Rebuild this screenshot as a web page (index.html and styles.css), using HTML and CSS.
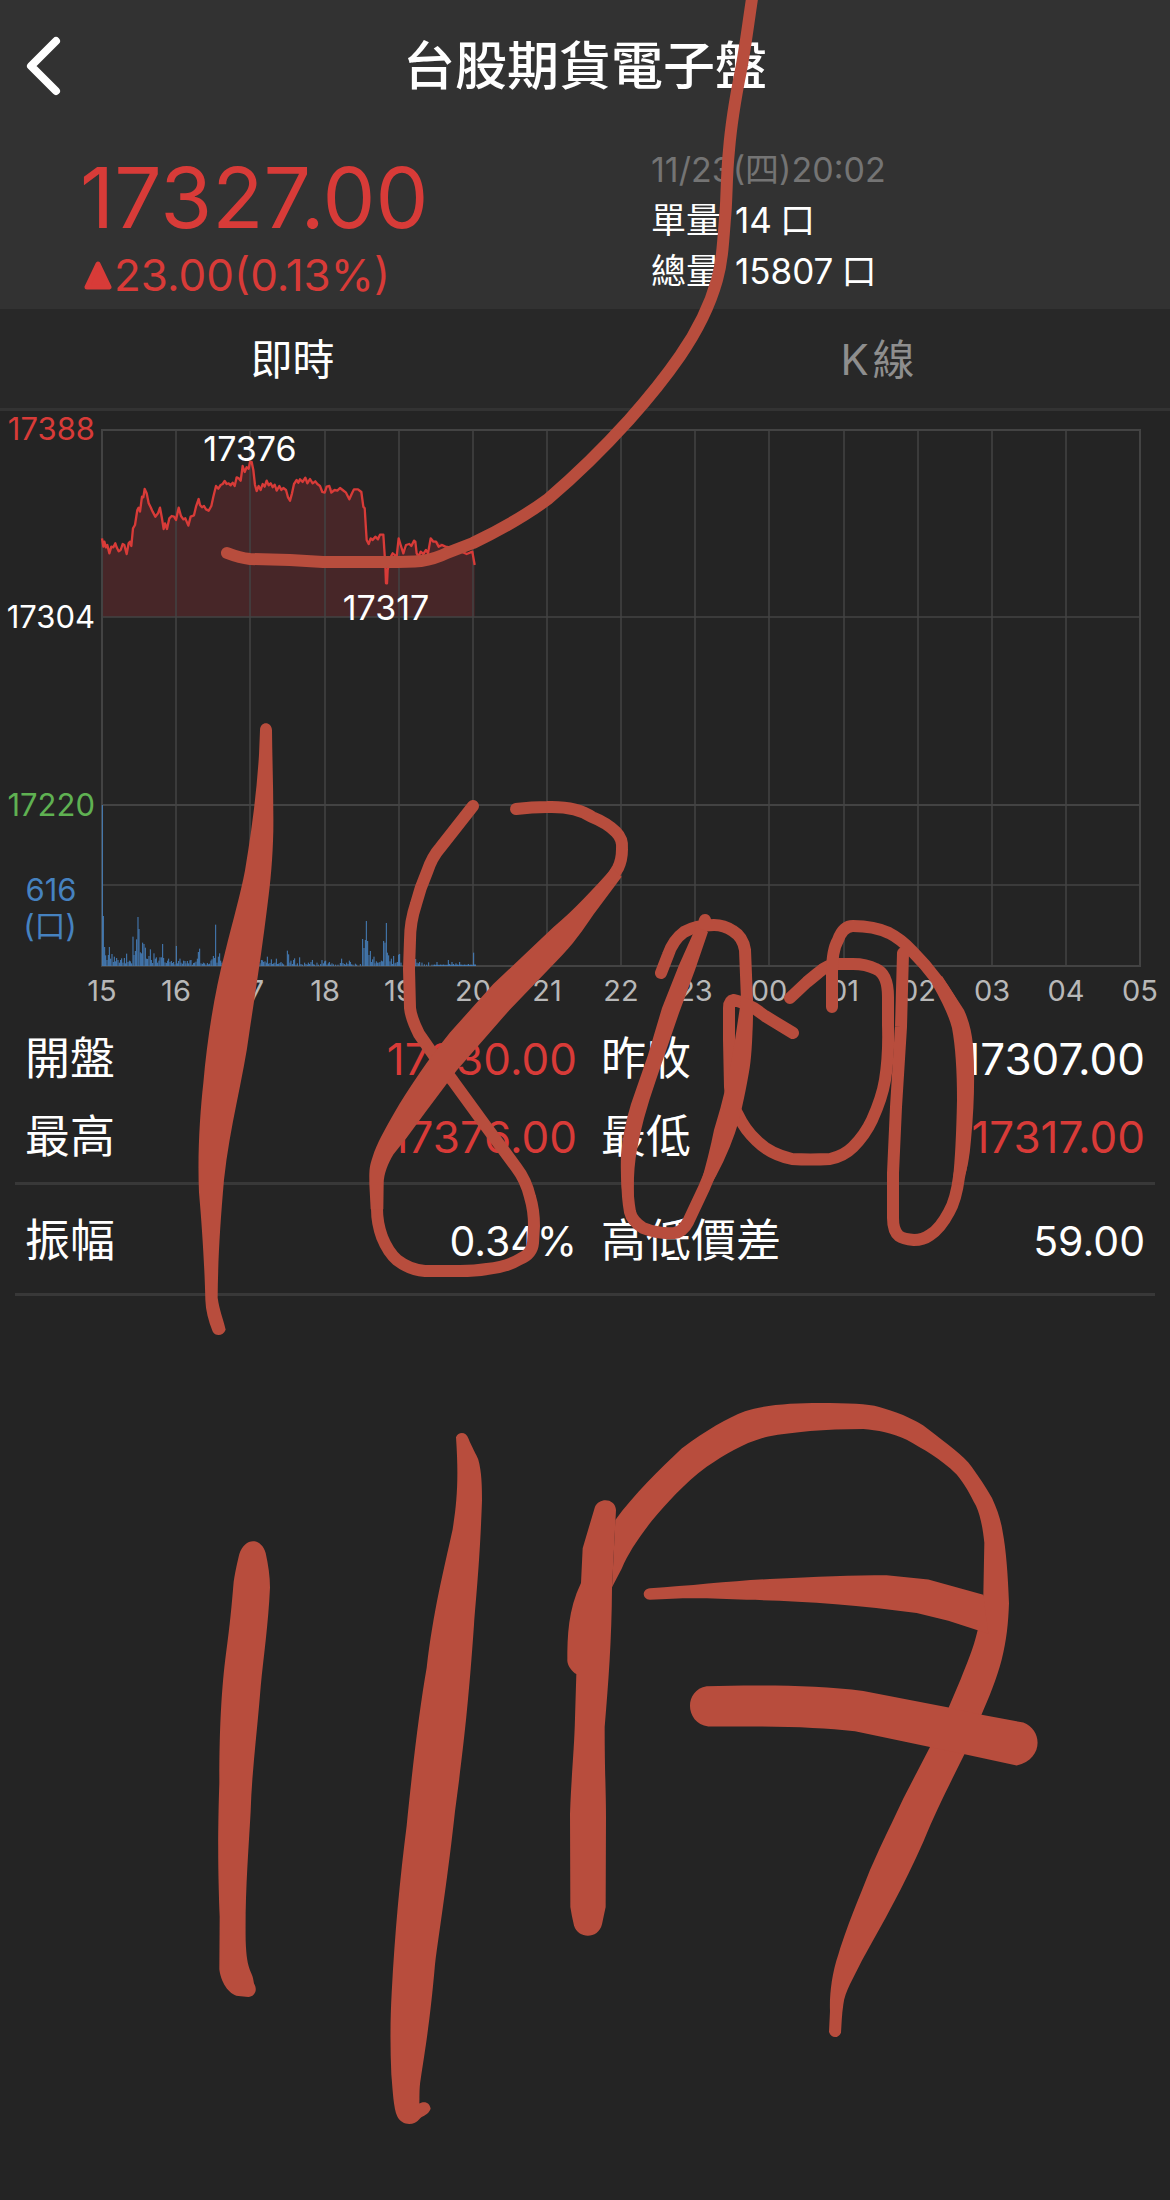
FILE: index.html
```html
<!DOCTYPE html>
<html lang="zh-Hant">
<head>
<meta charset="utf-8">
<meta name="viewport" content="width=device-width, initial-scale=1">
<title>台股期貨電子盤</title>
<link rel="stylesheet" href="styles.css">
</head>
<body>
<header class="header">
  <div class="topbar">
    <button class="back" type="button" aria-label="返回">
      <svg width="36" height="60" viewBox="0 0 36 60" aria-hidden="true"><path d="M31 5 L6 30 L31 55"/></svg>
    </button>
    <h1 class="title">台股期貨電子盤</h1>
  </div>
  <div class="quote">
    <div class="quote-price">
      <div class="price">17327.00</div>
      <div class="change">
        <svg class="arrow" width="28" height="29" viewBox="0 0 28 29" aria-hidden="true"><path d="M14 3 L25 26 H3 Z"/></svg>
        <span>23.00(0.13%)</span>
      </div>
    </div>
    <div class="quote-info">
      <div class="time">11/23(四)20:02</div>
      <div class="lots"><span>單量</span><span>14</span><span>口</span></div>
      <div class="lots"><span>總量</span><span>15807</span><span>口</span></div>
    </div>
  </div>
</header>

<nav class="tabs">
  <button class="tab tab-active" type="button">即時</button>
  <button class="tab" type="button"><span>K</span><span>線</span></button>
</nav>

<main>
  <svg class="chart" viewBox="0 411 1170 609" role="img" aria-label="即時走勢圖">
    <g transform="translate(0 410) scale(.33333)">
      <path class="area" d="M306 621 V385 L310 410 313 395 318 412 322 405 328 430 334 410 340 412 346 400 350 412 356 424 362 420 368 402 373 405 380 432 386 400 390 395 394 408 399 355 405 345 412 300 416 293 420 305 426 260 430 262 434 237 440 250 446 280 452 292 458 305 466 320 474 310 480 293 485 320 491 357 495 340 501 357 508 325 515 318 522 320 528 330 536 293 543 318 550 328 556 325 565 347 572 320 582 316 588 290 596 267 600 285 606 292 612 288 618 298 626 302 634 288 640 260 648 228 655 236 662 225 668 222 674 213 680 222 698 220 704 228 710 202 722 212 728 168 734 186 740 172 746 176 750 156 755 156 760 180 765 225 770 243 776 228 782 240 788 222 794 230 800 212 806 226 830 242 838 228 858 240 870 272 880 222 890 210 916 203 952 222 967 246 988 228 1004 240 1028 240 1048 268 1062 238 1084 246 1100 390 1106 402 1112 385 1140 374 1150 374 1158 520 1161 520 1170 445 1190 440 1196 385 1210 430 1242 392 1250 430 1284 430 1292 385 1350 412 1400 430 1417 425 1424 465 V621 Z"/>
    </g>
    <path class="grid" d="M176 430V966 M250 430V966 M325 430V966 M399 430V966 M473 430V966 M547 430V966 M621 430V966 M695 430V966 M769 430V966 M844 430V966 M918 430V966 M992 430V966 M1066 430V966 M102 617H1140 M102 885H1140"/>
    <path class="frame" d="M102 430H1140V966H102Z M102 805H1140"/>
    <g transform="translate(0 410) scale(.33333)">
      <path class="line" d="M306 385 L310 410 313 395 318 412 322 405 328 430 334 410 340 412 346 400 350 412 356 424 362 420 368 402 373 405 380 432 386 400 390 395 394 408 399 355 405 345 412 300 416 293 420 305 426 260 430 262 434 237 440 250 446 280 452 292 458 305 466 320 474 310 480 293 485 320 491 357 495 340 501 357 508 325 515 318 522 320 528 330 536 293 543 318 550 328 556 325 565 347 572 320 582 316 588 290 596 267 600 285 606 292 612 288 618 298 626 302 634 288 640 260 648 228 655 236 662 225 668 222 674 213 680 222 686 220 692 226 698 218 704 228 710 202 716 205 722 212 728 168 734 186 740 172 746 176 750 156 755 156 760 180 765 225 770 243 776 228 782 240 788 222 794 230 800 212 806 226 812 220 818 232 824 224 830 242 838 228 844 240 850 234 858 240 864 262 870 272 876 250 882 222 890 210 895 218 900 208 908 216 916 203 922 220 930 207 938 220 946 214 952 222 960 228 967 246 974 248 980 230 988 228 994 248 1004 240 1012 242 1020 234 1028 240 1038 248 1048 268 1056 250 1062 238 1074 238 1084 246 1090 290 1094 295 1100 390 1106 402 1112 385 1118 390 1126 380 1134 388 1140 374 1150 374 1156 465 1158 520 1161 520 1163 480 1170 445 1178 430 1190 440 1196 385 1202 405 1210 430 1218 405 1228 402 1234 408 1242 392 1246 395 1250 430 1256 440 1262 425 1270 432 1278 420 1284 430 1292 385 1300 395 1308 395 1316 410 1326 405 1336 410 1350 412 1370 418 1400 432 1417 425 1424 465"/>
    </g>
    <g transform="translate(0 840) scale(.33333)">
      <path class="volume" d="M307 378V-105 M310 378V228 M314 378V321 M317 378V346 M321 378V360 M325 378V345 M328 378V321 M332 378V356 M336 378V342 M340 378V366 M343 378V350 M347 378V364 M350 378V354 M354 378V360 M358 378V368 M362 378V360 M365 378V355 M369 378V368 M373 378V354 M377 378V370 M380 378V341 M384 378V366 M388 378V362 M391 378V364 M395 378V370 M399 378V290 M402 378V345 M406 378V333 M410 378V298 M414 378V231 M417 378V267 M421 378V337 M425 378V340 M428 378V308 M432 378V312 M436 378V323 M440 378V356 M443 378V357 M447 378V348 M451 378V328 M454 378V360 M458 378V369 M462 378V340 M466 378V356 M469 378V352 M473 378V368 M477 378V362 M480 378V352 M484 378V352 M488 378V312 M491 378V354 M495 378V367 M499 378V369 M503 378V362 M506 378V356 M510 378V366 M514 378V363 M517 378V369 M521 378V366 M525 378V373 M529 378V318 M532 378V370 M536 378V363 M540 378V356 M543 378V368 M547 378V371 M551 378V362 M555 378V363 M558 378V370 M562 378V363 M566 378V370 M570 378V361 M573 378V360 M577 378V374 M581 378V369 M584 378V368 M588 378V365 M592 378V356 M595 378V336 M599 378V326 M603 378V370 M607 378V372 M610 378V368 M614 378V370 M618 378V374 M622 378V369 M625 378V373 M629 378V371 M633 378V362 M636 378V358 M640 378V348 M644 378V354 M647 378V254 M651 378V368 M655 378V350 M659 378V340 M662 378V362 M666 378V368 M670 378V364 M674 378V358 M677 378V366 M760 378V368 M765 378V370 M770 378V358 M775 378V366 M780 378V370 M784 378V360 M788 378V361 M791 378V366 M795 378V364 M799 378V368 M802 378V350 M806 378V371 M810 378V369 M814 378V358 M817 378V372 M821 378V370 M825 378V368 M829 378V356 M832 378V372 M836 378V371 M840 378V369 M843 378V366 M847 378V370 M851 378V373 M862 378V332 M866 378V343 M870 378V368 M873 378V362 M877 378V372 M881 378V360 M884 378V355 M888 378V374 M892 378V370 M899 378V352 M903 378V372 M907 378V374 M914 378V368 M918 378V372 M922 378V374 M925 378V368 M929 378V372 M933 378V366 M937 378V360 M940 378V373 M944 378V374 M951 378V368 M955 378V374 M962 378V372 M966 378V360 M970 378V370 M974 378V364 M977 378V362 M981 378V374 M985 378V370 M988 378V366 M992 378V374 M996 378V370 M1000 378V373 M1007 378V374 M1014 378V374 M1021 378V369 M1025 378V356 M1029 378V369 M1033 378V372 M1036 378V374 M1040 378V368 M1044 378V372 M1048 378V362 M1051 378V366 M1055 378V373 M1059 378V374 M1066 378V371 M1070 378V374 M1081 378V372 M1088 378V297 M1092 378V324 M1096 378V300 M1099 378V243 M1103 378V303 M1107 378V345 M1111 378V333 M1114 378V366 M1118 378V358 M1122 378V350 M1125 378V370 M1129 378V364 M1133 378V368 M1137 378V368 M1140 378V366 M1144 378V362 M1148 378V364 M1151 378V303 M1155 378V308 M1159 378V249 M1162 378V338 M1166 378V346 M1170 378V364 M1174 378V356 M1177 378V372 M1181 378V348 M1185 378V370 M1188 378V368 M1192 378V366 M1196 378V344 M1199 378V342 M1203 378V368 M1247 378V357 M1251 378V368 M1255 378V370 M1259 378V366 M1266 378V368 M1273 378V373 M1280 378V374 M1286 378V367 M1296 378V374 M1303 378V374 M1311 378V366 M1322 378V374 M1330 378V374 M1345 378V360 M1349 378V372 M1356 378V366 M1360 378V372 M1368 378V370 M1372 378V374 M1379 378V366 M1383 378V374 M1394 378V374 M1405 378V372 M1413 378V374 M1421 378V338 M1425 378V373 M1300 376H1428"/>
    </g>
    <g class="price-label">
      <text class="up" x="95" y="440">17388</text>
      <text x="95" y="628">17304</text>
      <text class="down" x="95" y="816">17220</text>
    </g>
    <g class="volume-label">
      <text x="51" y="901">616</text>
      <text x="50" y="937">(口)</text>
    </g>
    <g class="peak-label">
      <text x="250" y="461">17376</text>
      <text x="386" y="620">17317</text>
    </g>
    <g class="hour-label">
      <text x="102" y="1001">15</text><text x="176" y="1001">16</text><text x="250" y="1001">17</text><text x="325" y="1001">18</text><text x="399" y="1001">19</text><text x="473" y="1001">20</text><text x="547" y="1001">21</text><text x="621" y="1001">22</text><text x="695" y="1001">23</text><text x="769" y="1001">00</text><text x="844" y="1001">01</text><text x="918" y="1001">02</text><text x="992" y="1001">03</text><text x="1066" y="1001">04</text><text x="1140" y="1001">05</text>
    </g>
  </svg>

  <table class="stats">
    <tr>
      <th scope="row">開盤</th><td class="up">17330.00</td>
      <th scope="row">昨收</th><td>17307.00</td>
    </tr>
    <tr class="ruled">
      <th scope="row">最高</th><td class="up">17376.00</td>
      <th scope="row">最低</th><td class="up">17317.00</td>
    </tr>
    <tr class="ruled derived">
      <th scope="row">振幅</th><td>0.34%</td>
      <th scope="row">高低價差</th><td>59.00</td>
    </tr>
  </table>
</main>

<!-- Hand-drawn marker notes over the screen -->
<svg class="ink" viewBox="0 0 1170 2200" aria-hidden="true">
  <g class="pen">
    <path d="M753 -8 C748 25 745 50 741 70 C736 95 731 125 729 150 C726 180 727 200 725 218 C723 245 722 262 717 280 C710 305 698 330 680 356 C660 385 645 402 629 420 C600 452 575 476 548 499 C525 516 500 530 473 543 L447 553 Q435 559 421 561 Q410 562 387 562 H323 L290 560 L250 559 Q240 558 227 553"/>
    <path d="M473 806 L440 848 Q432 857 427 872 Q420 888 416 904 Q410 922 410 940 L409 969 L410 1008 Q411 1018 419 1034 L437 1060 L453 1081 L485 1125 L516 1167 Q526 1180 530 1197 Q534 1210 534 1226 L533 1243 Q532 1254 520 1259 Q507 1267 487 1269 Q475 1271 460 1271 H425 Q410 1270 397 1260 Q388 1252 382 1237 Q377 1223 377 1209 V1176"/>
    <path d="M516 809 Q532 807 547 807 Q576 806 592 817 Q607 823 616 832 Q623 839 622 849 Q622 860 618 868 L612 878"/>
    <path d="M661 973 L668 955 Q673 940 684 932 Q696 925 714 925 Q724 925 733 931 Q743 937 745 950 L747 1000 Q747 1037 742 1067 L727 1127 L717 1157 L704 1188 L688 1222 Q683 1232 674 1233 Q658 1234 643 1228 Q632 1221 630 1212 Q626 1190 628 1160 Q630 1143 635 1123 L648 1077 L681 980 L696 945 L705 920"/>
    <path d="M793 1033 L765 1016 L754 1008 Q742 1002 734 1000 Q729 1001 729 1008 V1040 L730 1087 Q731 1104 738 1115 Q745 1130 757 1141 Q770 1154 792 1159 Q810 1160 830 1159 Q844 1156 853 1147 Q865 1135 872 1120 Q882 1098 885 1080 Q889 1055 888 1025 V997 Q888 974 876 969 Q866 964 853 964 H838 Q826 965 818 973 L807 982 L790 998"/>
    <path d="M832 1007 L832 973 Q832 950 838 940 Q843 926 853 926 Q874 926 889 933 Q901 939 912 951 Q926 965 937 980 Q950 998 958 1015 Q966 1036 967 1060 Q968 1100 964 1130 Q964 1155 959 1177 Q956 1200 949 1212 Q940 1229 930 1235 Q923 1240 914 1240 Q903 1239 899 1236 Q893 1231 893 1218 V1173 L896 1107 L901 1027 L903 953"/>
  </g>
  <g>
    <path d="M942 976 L964 1010 Q971 1025 973 1045 Q976 1087 971 1140 Q969 1165 964 1178 L953 1178 Q956 1150 957 1100 Q957 1055 952 1028 Q948 1012 932 984 Z"/>
    <path d="M753 1000 Q753 1050 749 1072 Q742 1112 735 1133 Q725 1162 708 1190 L700 1186 Q709 1155 714 1130 Q728 1085 735 1040 L741 1000 Z"/>
    <path d="M696 927 L679 965 L662 1008 L648 1055 L631 1104 Q623 1130 621 1155 Q620 1185 624 1202 L634 1200 Q633 1170 637 1150 Q642 1120 656 1080 L679 1013 L695 970 L708 932 Z"/>
  </g>
  <g transform="translate(160 700) scale(.33333 .42092)">
    <path d="M300 72 C300 50 335 50 336 72 C337 150 341 230 340 310 C338 380 332 430 322 490 C305 600 285 700 268 790 C250 900 210 1010 192 1140 C180 1250 174 1330 173 1420 C178 1450 190 1470 197 1496 C190 1512 165 1512 158 1500 C145 1475 137 1450 136 1425 C134 1350 126 1250 117 1170 C112 1080 120 980 130 910 C142 800 165 690 195 600 C220 520 242 460 255 405 C275 310 290 220 297 130 Z"/>
    <path d="M1357 398 C1300 450 1240 500 1180 540 L1000 675 L870 790 C840 820 810 850 780 885 C750 920 725 950 700 985 C675 1020 650 1055 638 1085 C627 1110 628 1120 628 1150 L632 1210 L670 1210 L671 1150 C671 1125 685 1100 700 1080 L740 1040 L800 975 L890 880 L1050 735 L1190 620 C1240 580 1270 545 1300 510 L1385 420 Z"/>
  </g>
  <g transform="translate(180 1400) scale(.33333 .47832)">
    <path d="M178 322 C195 285 245 288 257 320 C265 345 270 370 270 392 C265 470 250 540 242 600 C232 690 215 780 212 860 C205 950 195 1030 197 1130 C200 1200 218 1190 222 1220 C235 1235 222 1248 205 1248 L175 1246 C145 1243 122 1215 118 1190 L119 1080 C115 1000 112 930 118 800 C118 680 125 600 138 530 C150 470 155 430 161 380 C168 350 172 340 178 322 Z"/>
    <path d="M828 78 C835 66 858 66 865 80 C875 98 890 115 895 125 C905 150 906 180 906 210 C900 330 890 400 882 470 C865 640 850 730 825 860 C805 990 780 1100 765 1180 C750 1300 735 1360 722 1420 C717 1440 719 1460 718 1471 C735 1464 750 1470 752 1482 C745 1495 730 1496 720 1502 C700 1520 665 1516 652 1498 C640 1480 638 1440 634 1410 C630 1350 631 1290 635 1240 C645 1110 660 1000 680 890 C700 750 720 640 740 560 C760 440 790 360 818 270 C832 210 836 160 828 78 Z"/>
  </g>
  <g transform="translate(540 1380) scale(.33333 .43367)">
    <path d="M128 388 L165 292 C178 270 226 272 228 300 L216 480 C215 600 205 700 194 800 C194 900 198 950 198 1010 L197 1215 Q190 1240 186 1255 C175 1290 115 1290 102 1258 Q95 1235 91 1215 L90 1000 C95 900 103 850 105 780 L109 678 C98 674 83 660 82 648 C82 590 84 530 123 468 Z"/>
    <path d="M226 323 C280 265 360 205 425 158 C500 115 560 88 615 72 C680 55 780 52 870 53 C950 54 1000 56 1030 65 C1090 78 1130 95 1150 105 C1200 135 1250 162 1285 190 C1315 220 1340 250 1356 272 C1372 300 1382 320 1388 350 C1398 390 1404 450 1407 515 C1405 560 1400 600 1385 645 C1370 690 1345 735 1325 771 L1274 862 C1230 930 1190 990 1150 1065 C1090 1170 1030 1250 965 1340 C940 1380 915 1410 910 1440 C905 1465 905 1485 903 1505 C895 1519 873 1519 867 1503 L870 1455 C868 1420 875 1370 895 1325 C930 1240 960 1190 990 1130 C1030 1060 1060 1015 1090 965 L1170 846 L1226 755 L1262 690 C1280 655 1300 620 1313 577 L1330 495 L1333 375 C1328 340 1322 315 1308 290 C1290 265 1275 240 1250 218 C1200 180 1150 160 1100 138 C1060 123 1010 115 970 113 C850 113 760 120 685 130 C610 145 560 170 500 200 C430 240 380 285 335 325 C290 370 265 400 245 435 L216 478 Z"/>
    <path d="M330 480 C450 475 580 463 690 459 C830 453 940 450 1040 450 L1165 460 L1330 495 L1345 585 L1313 577 L1225 555 L1130 537 C950 518 760 508 620 507 C520 503 430 501 330 507 C305 505 305 482 330 480 Z"/>
    <path d="M500 706 C650 703 830 703 970 717 L1226 755 L1325 772 L1450 790 C1510 808 1510 875 1430 889 L1274 863 L1170 846 L945 810 C830 800 700 798 505 799 C435 792 430 715 500 706 Z"/>
  </g>
</svg>
</body>
</html>
```
FILE: styles.css
```css
:root {
  --bg: #242424;
  --bar: #323232;
  --tab: #282828;
  --rule: #383838;
  --up: #d83b38;
  --down: #5fb152;
  --blue: #4682c0;
  --ink: #b84d3d;
}

* {
  box-sizing: border-box;
}

body {
  position: relative;
  min-height: 100vh;
  margin: 0;
  overflow-x: hidden;
  background: var(--bg);
  color: #fff;
  font-family: Inter, "Noto Sans CJK TC", sans-serif;
}

button {
  padding: 0;
  border: 0;
  background: none;
  color: inherit;
  font: inherit;
}

.header {
  background: var(--bar);
}

.topbar {
  display: grid;
  grid-template-columns: 96px 1fr 96px;
  align-items: center;
  height: 132px;
}

.back {
  display: flex;
  padding-left: 25px;
}

.back path {
  fill: none;
  stroke: #fff;
  stroke-width: 8;
  stroke-linecap: round;
  stroke-linejoin: round;
}

.title {
  margin: 0;
  padding-top: 2px;
  font-size: 52px;
  font-weight: 500;
  line-height: 62px;
  text-align: center;
}

.quote {
  display: grid;
  grid-template-columns: 1fr 1fr;
  height: 177px;
}

.quote-price {
  padding: 24px 0 0 80px;
  color: var(--up);
}

.price {
  font-size: 84px;
  line-height: 84px;
}

.change {
  display: flex;
  align-items: center;
  gap: 2px;
  padding: 8px 0 0 4px;
  font-size: 44px;
  line-height: 54px;
}

.arrow path {
  fill: var(--up);
  stroke: var(--up);
  stroke-width: 5;
  stroke-linejoin: round;
}

.quote-info {
  padding: 12px 0 0 66px;
  font-size: 35px;
  line-height: 51px;
}

.time {
  color: #747474;
  font-size: 34px;
}

.lots {
  display: flex;
  gap: 8px;
}

.lots span:first-child {
  margin-right: 6px;
}

.tabs {
  display: grid;
  grid-template-columns: 1fr 1fr;
  border-bottom: 3px solid #333;
  background: var(--tab);
}

.tab {
  display: flex;
  align-items: center;
  justify-content: center;
  gap: 4px;
  height: 99px;
  padding-top: 2px;
  color: #8e8e8e;
  font-size: 42px;
  line-height: 60px;
}

.tab-active {
  color: #fff;
}

.chart {
  display: block;
  width: 100%;
}

.grid,
.frame {
  fill: none;
  stroke: #434343;
  stroke-width: 1.5;
}

.frame {
  stroke-width: 2;
}

.area {
  fill: #472628;
}

.line {
  fill: none;
  stroke: var(--up);
  stroke-width: 7;
  stroke-linejoin: round;
}

.volume {
  fill: none;
  stroke: var(--blue);
  stroke-width: 3;
}

.chart text {
  fill: #fff;
  font-size: 31px;
  text-anchor: middle;
}

.chart .price-label text {
  text-anchor: end;
}

.chart .peak-label text {
  font-size: 34px;
}

.chart .volume-label text {
  fill: var(--blue);
}

.chart .hour-label text {
  fill: #b8b8b8;
  font-size: 29px;
}

.chart .price-label .up {
  fill: var(--up);
}

.chart .price-label .down {
  fill: var(--down);
}

.stats {
  width: calc(100% - 30px);
  margin: 0 15px;
  border-collapse: collapse;
  table-layout: fixed;
  font-size: 44px;
  line-height: 60px;
}

.stats th,
.stats td {
  height: 78px;
  padding: 0 10px;
  font-weight: 400;
}

.stats th {
  font-size: 45px;
  text-align: left;
  white-space: nowrap;
}

.stats td {
  text-align: right;
}

.stats td:nth-child(2) {
  padding-right: 8px;
}

.stats th:nth-child(3) {
  padding-left: 16px;
}

.stats .up {
  color: var(--up);
}

.stats .ruled th,
.stats .ruled td {
  height: 85px;
  padding-bottom: 6px;
  border-bottom: 3px solid var(--rule);
}

.stats .derived th,
.stats .derived td {
  height: 111px;
  padding-top: 4px;
  padding-bottom: 0;
}

.stats .derived td {
  font-size: 41px;
}

.ink {
  position: absolute;
  top: 0;
  left: 0;
  width: 100%;
  fill: var(--ink);
  pointer-events: none;
}

.pen {
  fill: none;
  stroke: var(--ink);
  stroke-width: 12;
  stroke-linecap: round;
  stroke-linejoin: round;
}
```
